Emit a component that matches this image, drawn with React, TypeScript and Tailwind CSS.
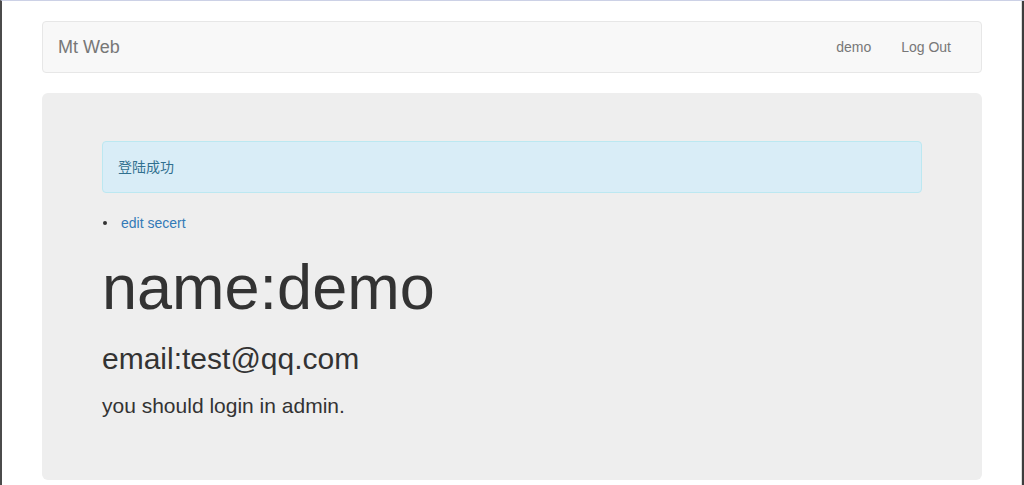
export default function App() {
  return (
    <div
      className="h-[485px] overflow-hidden bg-white border-t border-t-[#ccd1e6] border-l-2 border-l-[#4b4b4b] flex text-[14px] leading-[20px] text-[#333]"
      style={{ fontFamily: "'Liberation Sans', Arial, 'Noto Sans CJK SC', sans-serif" }}
    >
      <div className="flex-1 pl-[40px] pr-[39px] pt-[20px]">
        {/* Navbar */}
        <nav className="h-[52px] bg-[#f8f8f8] border border-[#e7e7e7] rounded-[4px] flex items-center justify-between">
          <a className="px-[15px] text-[18px] leading-[20px] text-[#777]">Mt Web</a>
          <ul className="flex pr-[15px]">
            <li>
              <a className="block px-[15px] py-[15px] text-[#777]">demo</a>
            </li>
            <li>
              <a className="block px-[15px] py-[15px] text-[#777]">Log Out</a>
            </li>
          </ul>
        </nav>

        {/* Jumbotron */}
        <div className="mt-[20px] bg-[#eee] rounded-[6px] px-[60px] pt-[48px] h-[387px]">
          <div className="bg-[#d9edf7] border border-[#bce8f1] rounded-[4px] text-[#31708f] px-[15px] py-[15px]">
            登陆成功
          </div>
          <ul className="mt-[20px]">
            <li className="flex items-center">
              <span className="w-[4px] h-[4px] rounded-full bg-[#333] ml-[1px]" />
              <a className="ml-[14px] text-[#337ab7]">edit secert</a>
            </li>
          </ul>
          <h1 className="mt-[20px] text-[63px] leading-[69px] text-[#333]">name:demo</h1>
          <h2 className="mt-[20px] text-[30px] leading-[33px] text-[#333]">email:test@qq.com</h2>
          <p className="mt-[16px] text-[21px] leading-[30px] text-[#333]">you should login in admin.</p>
        </div>
      </div>
      <div className="w-px bg-[#dcdcdc]" />
      <div className="w-[2px] bg-[#3d3d3d]" />
    </div>
  )
}
